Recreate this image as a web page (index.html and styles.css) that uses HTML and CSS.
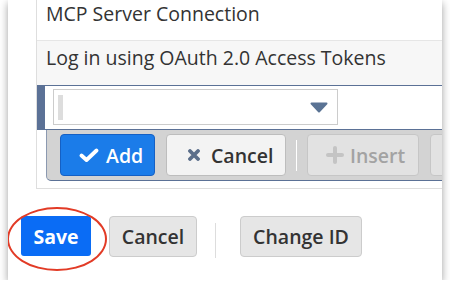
FILE: index.html
```html
<!DOCTYPE html>
<html>
<head>
<meta charset="utf-8">
<link rel="stylesheet" href="styles.css">
</head>
<body>
<div class="card">
  <div class="grid">
    <div class="row row-first">MCP Server Connection</div>
    <div class="row row-alt">Log in using OAuth 2.0 Access Tokens</div>
    <div class="editor">
      <div class="edit-line">
        <div class="marker"></div>
        <div class="field-wrap">
          <div class="select">
            <span class="caret-block"></span>
            <svg class="arrow" width="18" height="11" viewBox="0 0 18 11"><path d="M1.5 1.5 H16.5 L9 9.5 Z" fill="#5a7394" stroke="#5a7394" stroke-width="2" stroke-linejoin="round"/></svg>
          </div>
        </div>
      </div>
      <div class="toolbar">
        <button class="tb-btn tb-add">
          <svg width="20" height="14" viewBox="0 0 20 14"><path d="M2.5 7.5 L7.5 12 L17.5 2.5" fill="none" stroke="#fff" stroke-width="3.8" stroke-linecap="round" stroke-linejoin="round"/></svg>
          <span>Add</span>
        </button>
        <button class="tb-btn tb-cancel">
          <svg width="12" height="12" viewBox="0 0 12 12"><path d="M2 2 L10 10 M10 2 L2 10" fill="none" stroke="#5b6e8a" stroke-width="3.8" stroke-linecap="round"/></svg>
          <span>Cancel</span>
        </button>
        <span class="tb-sep"></span>
        <button class="tb-btn tb-insert">
          <svg width="18" height="18" viewBox="0 0 18 18"><path d="M9 2 V16 M2 9 H16" fill="none" stroke="#c4c4c4" stroke-width="4" stroke-linecap="round"/></svg>
          <span>Insert</span>
        </button>
        <button class="tb-btn tb-more"></button>
      </div>
    </div>
  </div>
  <div class="footer">
    <div class="save-wrap">
      <button class="btn btn-save">Save</button>
      <span class="ring"></span>
    </div>
    <button class="btn btn-plain">Cancel</button>
    <span class="vsep"></span>
    <button class="btn btn-plain btn-change">Change ID</button>
  </div>
</div>
</body>
</html>
```
FILE: styles.css
```css
html, body {
  margin: 0;
  padding: 0;
  background: #ffffff;
}
body {
  font-family: "Open Sans", "Liberation Sans", sans-serif;
  color: #333;
  overflow: hidden;
}
.card {
  margin-left: 8px;
  width: 434px;
  height: 280px;
  background: #fff;
  box-shadow: 0 3px 8px rgba(0,0,0,0.38);
  overflow: hidden;
}
.grid {
  margin-left: 28px;
  width: 480px;
  border-left: 1px solid #dedede;
  border-bottom: 1px solid #dedede;
  padding-bottom: 7px;
}
.row {
  font-size: 19.5px;
  line-height: 24px;
  padding-left: 9px;
  color: #333;
  white-space: nowrap;
}
.row-first {
  height: 38px;
  padding-top: 2px;
  border-bottom: 1px solid #e6e6e6;
}
.row-alt {
  height: 39px;
  padding-top: 5px;
  background: #f7f7f7;
}
.editor {
  border-top: 1px solid #5b7196;
}
.edit-line {
  display: flex;
  height: 43px;
  border-bottom: 1px solid #5b7196;
}
.marker {
  width: 8px;
  background: #5b7196;
}
.field-wrap {
  padding: 3px 0 0 8px;
}
.select {
  width: 285px;
  height: 36px;
  border: 1px solid #cccccc;
  background: #fff;
  display: flex;
  align-items: center;
  justify-content: space-between;
  padding: 0 9px 0 4px;
  box-sizing: border-box;
}
.caret-block {
  width: 5px;
  height: 25px;
  background: #dddddd;
}
.arrow {
  display: block;
}
.toolbar {
  margin-left: 9px;
  height: 50px;
  background: #d3d3d3;
  border-left: 1px solid #8b99b0;
  border-bottom: 1px solid #5b7196;
  border-bottom-left-radius: 5px;
  display: flex;
  align-items: center;
  padding-left: 13px;
  gap: 11px;
}
.tb-btn {
  font-family: "Open Sans", "Liberation Sans", sans-serif;
  font-size: 19.5px;
  font-weight: 600;
  height: 42px;
  border-radius: 4px;
  display: flex;
  align-items: center;
  gap: 8px;
  box-sizing: border-box;
  flex-shrink: 0;
  margin: 0;
  white-space: nowrap;
}
.tb-add {
  width: 95px;
  background: #1b7ce9;
  border: 1px solid #1560c4;
  color: #fff;
  padding-left: 18px;
  gap: 7px;
}
.tb-cancel {
  width: 120px;
  background: #f3f3f3;
  border: 1px solid #bdbdbd;
  color: #333;
  padding-left: 21px;
  gap: 11px;
}
.tb-sep {
  width: 1px;
  height: 31px;
  background: #ffffff;
  flex-shrink: 0;
  margin: 0 -1px;
}
.tb-insert {
  width: 112px;
  background: #e2e2e2;
  border: 1px solid #c6c6c6;
  color: #a3a3a3;
  padding-left: 18px;
  gap: 6px;
}
.tb-more {
  width: 60px;
  background: #e2e2e2;
  border: 1px solid #c6c6c6;
}
.footer {
  display: flex;
  align-items: center;
  padding: 25px 0 0 13px;
}
.save-wrap {
  position: relative;
  margin-right: 18px;
}
.btn {
  font-family: "Open Sans", "Liberation Sans", sans-serif;
  font-size: 19.5px;
  font-weight: 600;
  height: 41px;
  border-radius: 4px;
  box-sizing: border-box;
  padding: 0;
  margin: 0;
  display: block;
  white-space: nowrap;
}
.btn-save {
  width: 70px;
  height: 40px;
  background: #0a6cf5;
  border: none;
  color: #fff;
  font-weight: 700;
  border-radius: 3px;
}
.ring {
  position: absolute;
  left: -14px;
  top: -9px;
  width: 100px;
  height: 64px;
  box-sizing: border-box;
  border: 2px solid #e23b26;
  border-radius: 50%;
}
.btn-plain {
  width: 88px;
  background: #e6e6e6;
  border: 1px solid #cccccc;
  color: #333;
}
.vsep {
  width: 1px;
  height: 35px;
  background: #dddddd;
  margin: 9px 24px 0 18px;
}
.btn-change {
  width: 122px;
}
```
